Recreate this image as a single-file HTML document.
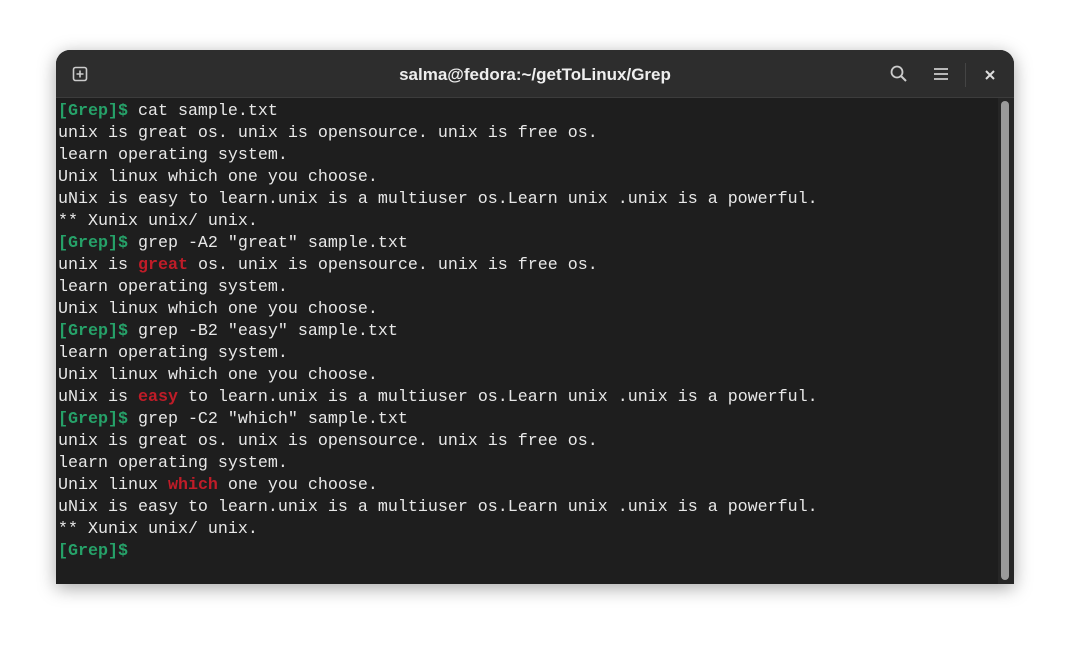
<!DOCTYPE html>
<html><head><style>
body{margin:0;width:1070px;height:646px;background:#fff;overflow:hidden;position:relative}
.win{position:absolute;left:56px;top:50px;width:958px;height:534px;background:#1e1e1e;border-radius:14px 14px 0 0;overflow:hidden;box-shadow:0 4px 18px rgba(0,0,0,.35)}
.hdr{position:absolute;left:0;top:0;width:958px;height:47px;background:#2d2d2d;border-bottom:1px solid #3c3c3c}
.title{position:absolute;left:0;width:958px;top:15px;text-align:center;color:#eee;font:bold 17px "Liberation Sans",sans-serif}
pre{position:absolute;left:2px;top:51px;margin:0;font:16.67px/22px "Liberation Mono",monospace;color:#e8e8e8}
.p{color:#26a269;font-weight:bold}.r{color:#c01c28;font-weight:bold}
.sb{position:absolute;left:945px;top:51px;width:8px;height:479px;background:#9a9a9a;border-radius:4px}
.sbt{position:absolute;left:942px;top:48px;width:16px;height:486px;background:#262626}
</style></head><body>
<div class="win">
<div class="hdr">
<svg style="position:absolute;left:16px;top:16px" width="16" height="16"><rect x="1.5" y="1.5" width="13" height="13" rx="2" fill="none" stroke="#ccc" stroke-width="1.6"/><path d="M8 4.5v7M4.5 8h7" stroke="#ccc" stroke-width="1.6"/></svg>
<div class="title">salma@fedora:~/getToLinux/Grep</div>
<svg style="position:absolute;left:834px;top:15px" width="18" height="18"><circle cx="7" cy="7" r="5.5" fill="none" stroke="#ccc" stroke-width="1.8"/><path d="M11 11l5 5" stroke="#ccc" stroke-width="2"/></svg>
<svg style="position:absolute;left:877px;top:17px" width="16" height="14"><path d="M1 2h14M1 7h14M1 12h14" stroke="#ccc" stroke-width="1.8"/></svg>
<div style="position:absolute;left:909px;top:13px;width:1px;height:24px;background:#444"></div>
<svg style="position:absolute;left:929px;top:20px" width="10" height="10"><path d="M1 1l8 8M9 1l-8 8" stroke="#ddd" stroke-width="2"/></svg>
</div>
<div class="sbt"></div><div class="sb"></div>
<pre><span class="p">[Grep]$</span> cat sample.txt
unix is great os. unix is opensource. unix is free os.
learn operating system.
Unix linux which one you choose.
uNix is easy to learn.unix is a multiuser os.Learn unix .unix is a powerful.
** Xunix unix/ unix.
<span class="p">[Grep]$</span> grep -A2 "great" sample.txt
unix is <span class="r">great</span> os. unix is opensource. unix is free os.
learn operating system.
Unix linux which one you choose.
<span class="p">[Grep]$</span> grep -B2 "easy" sample.txt
learn operating system.
Unix linux which one you choose.
uNix is <span class="r">easy</span> to learn.unix is a multiuser os.Learn unix .unix is a powerful.
<span class="p">[Grep]$</span> grep -C2 "which" sample.txt
unix is great os. unix is opensource. unix is free os.
learn operating system.
Unix linux <span class="r">which</span> one you choose.
uNix is easy to learn.unix is a multiuser os.Learn unix .unix is a powerful.
** Xunix unix/ unix.
<span class="p">[Grep]$</span> </pre>
</div>
</body></html>
